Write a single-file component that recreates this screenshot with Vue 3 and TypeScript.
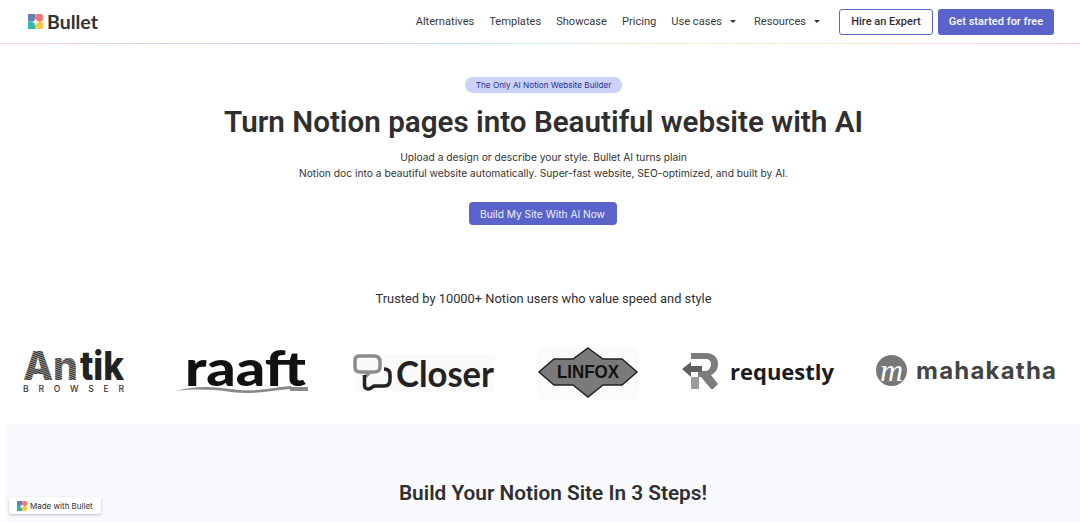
<script setup lang="ts">
const links: string[] = ['Alternatives', 'Templates', 'Showcase', 'Pricing']
const menus: string[] = ['Use cases', 'Resources']
</script>

<template>
  <div class="page">
    <header class="nav">
      <a class="brand">
        <svg class="mark" width="15" height="15" viewBox="0 0 17 17">
          <rect x="0" y="0" width="8.500" height="8.500" fill="#6080b6" />
          <rect x="8.500" y="0" width="8.500" height="8.500" rx="3" fill="#f7736b" />
          <rect x="0" y="8.500" width="8.500" height="8.500" fill="#2fb9a8" />
          <rect x="8.500" y="8.500" width="8.500" height="8.500" rx="3" fill="#fcc53f" />
          <path d="M7.300 6.200h2.400v1.900h1.900v1.800h-1.900v1.900h-2.400v-1.900h-1.900v-1.800h1.900z" fill="#fff" />
        </svg>
        <span class="brand-text">Bullet</span>
      </a>
      <nav class="links">
        <a v-for="l in links" :key="l" class="link">{{ l }}</a>
        <a v-for="m in menus" :key="m" class="link menu">{{ m }}<i class="caret"></i></a>
      </nav>
      <a class="btn-outline">Hire an Expert</a>
      <a class="btn-solid">Get started for free</a>
    </header>

    <main class="hero">
      <span class="pill">The Only AI Notion Website Builder</span>
      <h1>Turn Notion pages into Beautiful website with AI</h1>
      <p class="lead">Upload a design or describe your style. Bullet AI turns plain<br />Notion doc into a beautiful website automatically. Super-fast website, SEO-optimized, and built by AI.</p>
      <a class="cta">Build My Site With AI Now</a>
      <p class="trusted">Trusted by 10000+ Notion users who value speed and style</p>
    </main>

    <section class="logos">
      <svg class="logo antik" width="103" height="44" viewBox="0 0 103 44">
        <defs>
          <pattern id="stripes" width="2" height="2" patternUnits="userSpaceOnUse" patternTransform="rotate(20)">
            <rect width="2" height="2" fill="#a8a8a8" />
            <rect width="2" height="1.100" fill="#2a2a2a" />
          </pattern>
        </defs>
        <text x="1" y="29" textLength="55" lengthAdjust="spacingAndGlyphs" class="l-antik-a" fill="url(#stripes)">An</text>
        <text x="58" y="29" textLength="44" lengthAdjust="spacingAndGlyphs" class="l-antik">tik</text>
        <text x="1" y="41" textLength="101" class="l-antik-sub">BROWSER</text>
      </svg>
      <svg class="logo raaft" width="134" height="44" viewBox="0 0 134 44">
        <text x="10" y="35" textLength="121" lengthAdjust="spacingAndGlyphs" class="l-raaft">raaft</text>
        <path d="M0 40C20 35 34 35 56 38C80 42 100 36 116 35V38C100 39 80 44 56 41C34 38 20 38 0 40Z" fill="#8a8a8a" />
        <rect x="115" y="36" width="18" height="4" fill="#8a8a8a" />
      </svg>
      <svg class="logo closer" width="142" height="38" viewBox="0 0 142 38">
        <rect width="142" height="38" fill="#fafafa" />
        <path d="M6 2H21C25 2 27 4 27 8V13C27 16 25 18 21 18H17L14 21V18H7C3 18 2 16 2 13V7C2 4 3 2 6 2Z" fill="none" stroke="#8c8c8c" stroke-width="3.500" />
        <path d="M11.500 21V31C11.500 35 15 36 18 34L21 32H31C35 32 37 30 37 26V21C37 17 35 15 31 15" fill="none" stroke="#222" stroke-width="3.500" />
        <text x="43" y="33" textLength="98" lengthAdjust="spacingAndGlyphs" class="l-closer">Closer</text>
      </svg>
      <svg class="logo linfox" width="102" height="54" viewBox="0 0 102 54">
        <rect width="102" height="54" rx="6" fill="#fbfbfb" />
        <path d="M51 2L66 13H85L100 26L85 39H66L51 51L36 39H17L2 26L17 13H36Z" fill="#7a7a7a" stroke="#222" stroke-width="1.500" />
        <text x="20" y="32" textLength="62" lengthAdjust="spacingAndGlyphs" class="l-linfox">LINFOX</text>
      </svg>
      <div class="requestly">
        <svg width="36" height="37" viewBox="0 0 36 37">
          <path d="M9 1H24C32 1 36 6 36 12C36 18 33 21 29 23L36 32L31 37H29L19 25H16V19H24C27 19 29 15 29 12C29 9 27 7 24 7H9Z" fill="#7c7c7c" />
          <path d="M9 14H20V20H9V25L0 17L9 10Z" fill="#5f5f5f" />
          <rect x="9" y="25" width="8" height="12" rx="1" fill="#9a9a9a" />
        </svg>
        <span>requestly</span>
      </div>
      <div class="maha">
        <span class="maha-mark">m</span>
        <span>mahakatha</span>
      </div>
    </section>

    <section class="steps">
      <h2>Build Your Notion Site In 3 Steps!</h2>
    </section>

    <a class="badge">
      <svg width="10" height="10" viewBox="0 0 17 17">
        <rect x="0" y="0" width="8.500" height="8.500" fill="#6080b6" />
        <rect x="8.500" y="0" width="8.500" height="8.500" rx="3" fill="#f7736b" />
        <rect x="0" y="8.500" width="8.500" height="8.500" fill="#2fb9a8" />
        <rect x="8.500" y="8.500" width="8.500" height="8.500" rx="3" fill="#fcc53f" />
        <path d="M7.300 6.200h2.400v1.900h1.900v1.800h-1.900v1.900h-2.400v-1.900h-1.900v-1.800h1.900z" fill="#fff" />
      </svg>
      Made with Bullet
    </a>
  </div>
</template>

<style>
html, body { margin: 0; padding: 0; overflow: hidden; background: #fff; }
</style>

<style scoped>
.page {
  position: relative;
  height: 522px;
  overflow: hidden;
  font-family: Inter, "Liberation Sans", sans-serif;
  color: #2f2f2f;
}
.nav {
  height: 43px;
  display: flex;
  align-items: center;
  padding: 0 26px 0 28px;
  border-bottom: 1px solid transparent;
  border-image: linear-gradient(90deg, #f7d3e4 0%, #ccd0f6 30%, #cde4f0 45%, #e6f6cf 60%, #f9f0c8 75%, #f6d5e6 92%, #f0d0e8 100%) 1;
}
.brand { display: flex; align-items: center; gap: 4px; }
.mark { display: block; }
.brand-text { font-family: Lato, sans-serif; font-size: 19.500px; font-weight: 700; color: #333; line-height: 22px; }
.links { margin-left: auto; display: flex; align-items: center; gap: 15px; }
.link { font-family: Roboto, sans-serif; font-size: 11.100px; color: #3a3a3a; }
.menu { display: flex; align-items: center; gap: 8px; margin-right: 3px; }
.caret { width: 0; height: 0; border-left: 3px solid transparent; border-right: 3px solid transparent; border-top: 3px solid #333; margin-left: 0; }
.btn-outline {
  margin-left: 16px;
  width: 92px; height: 24px;
  display: flex; align-items: center; justify-content: center;
  border: 1px solid #5a63c9;
  border-radius: 3px;
  font-family: Roboto, sans-serif; font-size: 11px; font-weight: 500; color: #2f2f2f;
}
.btn-solid {
  margin-left: 5px;
  width: 116px; height: 26px;
  display: flex; align-items: center; justify-content: center;
  background: #5a63c9;
  border-radius: 3px;
  font-family: Roboto, sans-serif; font-size: 11px; font-weight: 600; color: #f3f3fb;
}
.hero { display: flex; flex-direction: column; align-items: center; padding: 33px 0 0 7px; }
.pill {
  height: 16px; padding: 0 11px;
  display: flex; align-items: center;
  background: #ccd1f8; border-radius: 8px;
  font-size: 8.200px; color: #2b2f8f; line-height: 16px;
}
h1 {
  margin: 8px 0 0;
  font-family: Roboto, sans-serif; font-size: 29.600px; font-weight: 600; line-height: 42px; color: #2f2f2f;
}
.lead {
  margin: 6px 0 0;
  font-family: Inter, sans-serif; font-size: 10.250px; line-height: 16px; text-align: center; color: #333;
}
.cta {
  margin: 21px 0 0 -2px;
  width: 148px; height: 23px;
  display: flex; align-items: center; justify-content: center;
  background: #5a63c9; border-radius: 4px;
  font-size: 10.200px; color: #eef0fb;
}
.trusted {
  margin: 64px 0 0;
  font-family: Roboto, sans-serif; font-size: 12.860px; font-weight: 400; line-height: 20px; color: #2f2f2f;
}
.logos {
  height: 54px;
  margin-top: 37px;
  padding-left: 22px;
  display: flex;
  align-items: center;
}
.logo { display: block; flex: none; overflow: visible; }
.raaft { margin-left: 50px; }
.closer { margin-left: 44px; }
.linfox { margin-left: 42px; }
.l-antik-a { font-family: Inter, sans-serif; font-size: 40px; font-weight: 800; }
.l-antik { font-family: Inter, sans-serif; font-size: 40px; font-weight: 800; fill: #222; }
.l-antik-sub { font-family: Inter, sans-serif; font-size: 8.500px; font-weight: 500; fill: #333; }
.l-raaft { font-family: Lato, sans-serif; font-size: 50px; font-weight: 900; fill: #111; }
.l-linfox { font-family: "Liberation Sans", sans-serif; font-size: 18px; font-weight: 700; fill: #111; }
.l-closer { font-family: Lato, sans-serif; font-size: 36px; font-weight: 700; fill: #222; }
.requestly {
  flex: none; margin: -5px 0 0 43px; display: flex; align-items: center; gap: 12px;
  font-family: "Open Sans", sans-serif; font-size: 22px; font-weight: 700; color: #1c1c1c;
}
.maha {
  flex: none; margin: -5px 0 0 42px; display: flex; align-items: center; gap: 9px;
  font-family: Inter, sans-serif; font-size: 24px; font-weight: 700; color: #444; letter-spacing: 1.200px;
}
.maha-mark {
  width: 31px; height: 31px; border-radius: 50%; background: #777;
  display: flex; align-items: center; justify-content: center;
  font-family: "Liberation Serif", serif; font-style: italic; font-size: 32px; font-weight: 400; color: #fff; letter-spacing: 0; line-height: 31px;
}
.steps {
  margin: 24px 0 0 5px;
  width: 1096px;
  height: 98px;
  background: #f9fafe;
  border-radius: 4px 0 0 0;
  padding-top: 54px;
  box-sizing: border-box;
}
h2 {
  margin: 0;
  text-align: center;
  font-family: Roboto, sans-serif; font-size: 20.800px; font-weight: 600; line-height: 30px; color: #2f2f2f;
}
.badge {
  position: absolute; left: 9px; top: 497px;
  width: 92px; height: 17px;
  box-sizing: border-box;
  padding-left: 8px;
  display: flex; align-items: center; gap: 3px;
  background: #fff; border-radius: 3px;
  box-shadow: 0 1px 3px rgba(0, 0, 0, 0.25);
  font-size: 8px; color: #2f2f2f;
}
</style>
